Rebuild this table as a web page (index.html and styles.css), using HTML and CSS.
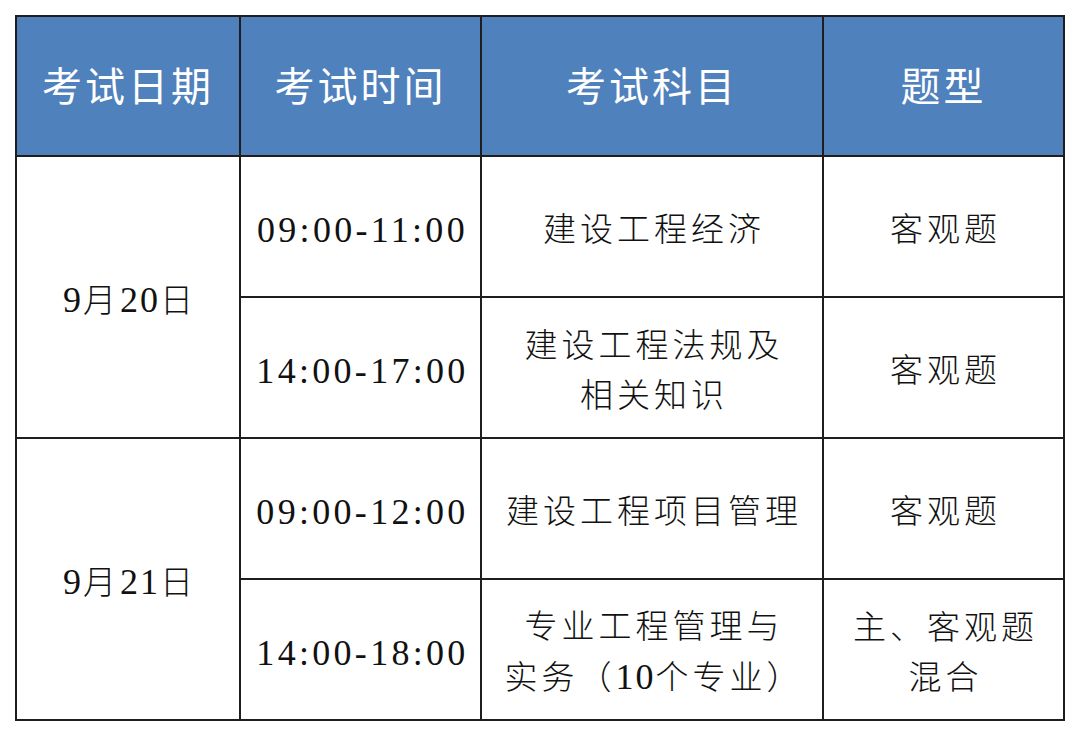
FILE: index.html
```html
<!DOCTYPE html>
<html lang="zh">
<head>
<meta charset="utf-8">
<link rel="stylesheet" href="styles.css">
</head>
<body>
<div class="wrap">
<table class="sched">
  <colgroup>
    <col class="c1"><col class="c2"><col class="c3"><col class="c4">
  </colgroup>
  <thead>
    <tr class="head">
      <th>考试日期</th><th>考试时间</th><th>考试科目</th><th>题型</th>
    </tr>
  </thead>
  <tbody>
    <tr>
      <td rowspan="2" class="date"><span class="num">9</span>月<span class="num">20</span>日</td>
      <td class="time">09:00-11:00</td>
      <td>建设工程经济</td>
      <td>客观题</td>
    </tr>
    <tr>
      <td class="time">14:00-17:00</td>
      <td>建设工程法规及<br>相关知识</td>
      <td>客观题</td>
    </tr>
    <tr>
      <td rowspan="2" class="date"><span class="num">9</span>月<span class="num">21</span>日</td>
      <td class="time">09:00-12:00</td>
      <td>建设工程项目管理</td>
      <td>客观题</td>
    </tr>
    <tr>
      <td class="time">14:00-18:00</td>
      <td>专业工程管理与<br>实务（<span class="num">10</span>个专业）</td>
      <td>主、客观题<br>混合</td>
    </tr>
  </tbody>
</table>
</div>
</body>
</html>
```
FILE: styles.css
```css
html, body {
  margin: 0;
  padding: 0;
  background: #ffffff;
}
.wrap {
  padding: 15px 0 0 15px;
}
.sched {
  border-collapse: separate;
  border-spacing: 0;
  table-layout: fixed;
  width: 1050px;
  border-top: 2px solid #1e1e1e;
  border-left: 2px solid #1e1e1e;
}
.c1 { width: 224px; }
.c2 { width: 241px; }
.c3 { width: 342px; }
.c4 { width: 241px; }
.sched th, .sched td {
  border-right: 2px solid #1e1e1e;
  border-bottom: 2px solid #1e1e1e;
  padding: 0;
  text-align: center;
  vertical-align: middle;
  box-sizing: border-box;
}
.head th {
  height: 140px;
  background: #4f81bd;
  color: #ffffff;
  font-family: "Noto Sans CJK SC", "Noto Sans", sans-serif;
  font-weight: 400;
  font-size: 40px;
  letter-spacing: 3px;
  padding-bottom: 4px;
}
.sched td {
  height: 141px;
  color: #111111;
  font-family: "Liberation Serif", "Noto Sans CJK SC", serif;
  font-weight: 300;
  font-size: 33px;
  line-height: 50px;
  letter-spacing: 4px;
  padding-top: 6px;
  padding-left: 4px;
}
.sched td.time {
  font-weight: 400;
  font-size: 36px;
  letter-spacing: 3.3px;
}
.num {
  font-weight: 400;
  font-size: 36px;
  letter-spacing: 2px;
}
```
